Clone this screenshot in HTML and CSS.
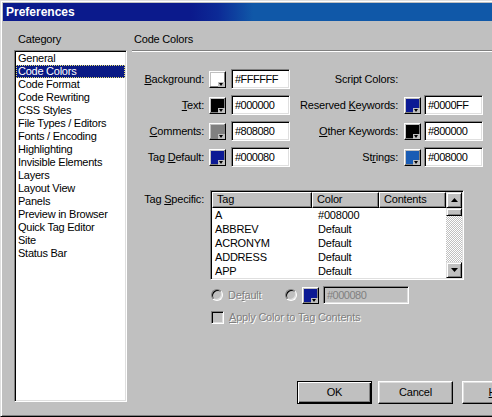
FILE: index.html
```html
<!DOCTYPE html>
<html>
<head>
<meta charset="utf-8">
<title>Preferences</title>
<link rel="stylesheet" href="styles.css">
</head>
<body>
<div class="window">
  <div class="titlebar">Preferences</div>
  <div class="content">
    <div class="cat-col">
      <div class="cat-label">Category</div>
      <ul class="listbox">
        <li>General</li>
        <li class="sel">Code Colors</li>
        <li>Code Format</li>
        <li>Code Rewriting</li>
        <li>CSS Styles</li>
        <li>File Types / Editors</li>
        <li>Fonts / Encoding</li>
        <li>Highlighting</li>
        <li>Invisible Elements</li>
        <li>Layers</li>
        <li>Layout View</li>
        <li>Panels</li>
        <li>Preview in Browser</li>
        <li>Quick Tag Editor</li>
        <li>Site</li>
        <li>Status Bar</li>
      </ul>
    </div>
    <div class="main">
      <div class="section-head">Code Colors</div>
      <div class="rule"></div>
      <div class="color-grid">
        <span class="lbl"><u>B</u>ackground:</span>
        <span class="swatch"><span class="chip c-white"></span><span class="drop"></span></span>
        <span class="field">#FFFFFF</span>
        <span class="lbl lbl2">Script Colors:</span>
        <span></span>
        <span></span>

        <span class="lbl"><u>T</u>ext:</span>
        <span class="swatch"><span class="chip c-black"></span><span class="drop"></span></span>
        <span class="field">#000000</span>
        <span class="lbl lbl2">Reserved <u>K</u>eywords:</span>
        <span class="swatch"><span class="chip c-navy"></span><span class="drop"></span></span>
        <span class="field">#0000FF</span>

        <span class="lbl"><u>C</u>omments:</span>
        <span class="swatch"><span class="chip c-gray"></span><span class="drop"></span></span>
        <span class="field">#808080</span>
        <span class="lbl lbl2"><u>O</u>ther Keywords:</span>
        <span class="swatch"><span class="chip c-black"></span><span class="drop"></span></span>
        <span class="field">#800000</span>

        <span class="lbl">Tag <u>D</u>efault:</span>
        <span class="swatch"><span class="chip c-navy"></span><span class="drop"></span></span>
        <span class="field">#000080</span>
        <span class="lbl lbl2">St<u>r</u>ings:</span>
        <span class="swatch"><span class="chip c-blue"></span><span class="drop"></span></span>
        <span class="field">#008000</span>
      </div>

      <div class="tag-row">
        <div class="lbl tag-lbl">Tag <u>S</u>pecific:</div>
        <div class="listview">
          <div class="lv-main">
            <div class="lv-head">
              <div class="hd col-tag">Tag</div>
              <div class="hd col-color">Color</div>
              <div class="hd col-contents">Contents</div>
            </div>
            <div class="lv-row"><span class="cell col-tag">A</span><span class="cell col-color">#008000</span><span class="cell col-contents"></span></div>
            <div class="lv-row"><span class="cell col-tag">ABBREV</span><span class="cell col-color">Default</span><span class="cell col-contents"></span></div>
            <div class="lv-row"><span class="cell col-tag">ACRONYM</span><span class="cell col-color">Default</span><span class="cell col-contents"></span></div>
            <div class="lv-row"><span class="cell col-tag">ADDRESS</span><span class="cell col-color">Default</span><span class="cell col-contents"></span></div>
            <div class="lv-row"><span class="cell col-tag">APP</span><span class="cell col-color">Default</span><span class="cell col-contents"></span></div>
          </div>
          <div class="vscroll">
            <div class="sb-btn"><svg width="7" height="4" viewBox="0 0 7 4"><path d="M3.5 0 L7 4 L0 4 Z" fill="#000"/></svg></div>
            <div class="sb-thumb"></div>
            <div class="sb-track"></div>
            <div class="sb-btn"><svg width="7" height="4" viewBox="0 0 7 4"><path d="M0 0 L7 0 L3.5 4 Z" fill="#000"/></svg></div>
          </div>
        </div>
      </div>

      <div class="opt-row">
        <span class="radio"></span>
        <span class="dis opt-default">De<u>f</u>ault</span>
        <span class="radio"></span>
        <span class="swatch opt-swatch"><span class="chip c-navy"></span><span class="drop"></span></span>
        <span class="field field-dis">#000080</span>
      </div>
      <div class="chk-row">
        <span class="checkbox"></span>
        <span class="dis"><u>A</u>pply Color to Tag Contents</span>
      </div>

      <div class="buttons">
        <div class="btn btn-default">OK</div>
        <div class="btn btn-cancel">Cancel</div>
        <div class="btn btn-help"><span><u>H</u>elp</span></div>
      </div>
    </div>
  </div>
</div>
</body>
</html>
```
FILE: styles.css
```css
* { box-sizing: border-box; margin: 0; padding: 0; }
html, body {
  width: 492px;
  height: 417px;
  overflow: hidden;
  background: #c0c0c0;
}
body {
  font-family: "Liberation Sans", Arial, sans-serif;
  font-size: 11px;
  line-height: 13px;
  letter-spacing: -0.2px;
  color: #000;
}
u { text-decoration: underline; text-underline-offset: 1px; }

.window {
  width: 600px;
  height: 417px;
  border: 1px solid;
  border-color: #dfdfdf #000 #000 #dfdfdf;
  box-shadow: inset 1px 1px 0 #fff, inset -1px -1px 0 #808080;
  padding: 2px;
  display: flex;
  flex-direction: column;
}
.titlebar {
  height: 18px;
  flex: none;
  background: linear-gradient(to right, #0b1a8c 188px, #0c2a96 215px, #1058a8 250px);
  color: #fff;
  font-weight: bold;
  font-size: 12px;
  letter-spacing: 0;
  padding-left: 3px;
  display: flex;
  align-items: center;
}
.content {
  flex: 1;
  display: flex;
}

/* Category column */
.cat-col {
  width: 124px;
  padding-left: 11px;
  margin-right: 5px;
  flex: none;
}
.cat-label {
  margin-top: 12px;
  height: 13px;
  padding-left: 4px;
  margin-bottom: 4px;
}
.listbox {
  list-style: none;
  width: 113px;
  height: 352px;
  background: #fff;
  border: 1px solid;
  border-color: #808080 #fff #fff #808080;
  box-shadow: inset 1px 1px 0 #000, inset -1px -1px 0 #dfdfdf;
  padding: 1px;
  letter-spacing: -0.25px;
}
.listbox li {
  height: 13px;
  line-height: 13px;
  padding-left: 2px;
  white-space: nowrap;
}
.listbox li.sel {
  background: #0a1a84;
  color: #fff;
  outline: 1px dotted #e6e070;
  outline-offset: -1px;
}

/* Main column */
.main {
  flex: 1;
  display: flex;
  flex-direction: column;
  padding-bottom: 10px;
}
.section-head {
  margin-top: 12px;
  height: 13px;
  padding-left: 2px;
}
.rule {
  margin-top: 4px;
  height: 2px;
  border-top: 1px solid #808080;
  border-bottom: 1px solid #fff;
}

.color-grid {
  margin-top: 17px;
  display: grid;
  grid-template-columns: 77px 22px 59px 114px 20px 59px;
  grid-auto-rows: 20px;
  row-gap: 6px;
  align-items: center;
}
.lbl {
  text-align: right;
  padding-right: 5px;
  white-space: nowrap;
}
.lbl2 { padding-right: 6px; }

.swatch {
  position: relative;
  width: 17px;
  height: 17px;
  background: #c0c0c0;
  border: 1px solid;
  border-color: #fff #000 #000 #fff;
  box-shadow: inset -1px -1px 0 #808080;
  align-self: end;
  margin-bottom: 1px;
}
.chip {
  display: block;
  position: absolute;
  left: 1px;
  top: 1px;
  width: 13px;
  height: 13px;
}
.c-white { background: #fff; }
.c-black { background: #000; }
.c-gray { background: #808080; }
.c-navy { background: #0c1a94; }
.c-blue { background: #1a5cb4; }
.drop {
  position: absolute;
  right: 0;
  bottom: 0;
  width: 7px;
  height: 5px;
  background: #c0c0c0;
}
.drop::after {
  content: "";
  position: absolute;
  left: 1px;
  top: 1px;
  border-left: 2.5px solid transparent;
  border-right: 2.5px solid transparent;
  border-top: 3px solid #000;
}

.field {
  height: 20px;
  background: #fff;
  border: 1px solid;
  border-color: #808080 #fff #fff #808080;
  box-shadow: inset 1px 1px 0 #000, inset -1px -1px 0 #dfdfdf;
  padding-left: 3px;
  display: flex;
  align-items: center;
  letter-spacing: -0.5px;
}

/* Tag specific */
.tag-row {
  margin-top: 23px;
  display: flex;
  align-items: flex-start;
}
.tag-lbl {
  width: 78px;
  padding-top: 3px;
  padding-right: 6px;
}
.listview {
  width: 254px;
  height: 90px;
  background: #fff;
  border: 1px solid;
  border-color: #808080 #fff #fff #808080;
  box-shadow: inset 1px 1px 0 #000, inset -1px -1px 0 #dfdfdf;
  padding: 1px;
  display: flex;
}
.lv-main { width: 234px; }
.lv-head { display: flex; height: 16px; }
.hd {
  height: 16px;
  background: #c0c0c0;
  border: 1px solid;
  border-color: #fff #000 #000 #fff;
  box-shadow: inset -1px -1px 0 #808080;
  padding-left: 4px;
  line-height: 13px;
}
.col-tag { width: 100px; }
.col-color { width: 67px; }
.col-contents { width: 67px; }
.lv-row {
  display: flex;
  height: 14px;
  line-height: 14px;
}
.cell { padding-left: 6px; white-space: nowrap; }
.cell.col-tag { padding-left: 3px; }

.vscroll {
  width: 16px;
  display: flex;
  flex-direction: column;
}
.sb-btn {
  width: 16px;
  height: 16px;
  background: #c0c0c0;
  border: 1px solid;
  border-color: #dfdfdf #000 #000 #dfdfdf;
  box-shadow: inset 1px 1px 0 #fff, inset -1px -1px 0 #808080;
  display: flex;
  align-items: center;
  justify-content: center;
}
.sb-thumb {
  height: 8px;
  background: #c0c0c0;
  border: 1px solid;
  border-color: #dfdfdf #000 #000 #dfdfdf;
  box-shadow: inset 1px 1px 0 #fff, inset -1px -1px 0 #808080;
}
.sb-track {
  flex: 1;
  background-image: repeating-conic-gradient(#c0c0c0 0% 25%, #fff 0% 50%);
  background-size: 2px 2px;
}

/* Options */
.opt-row {
  margin-top: 6px;
  margin-left: 79px;
  height: 18px;
  display: flex;
  align-items: center;
}
.radio {
  width: 12px;
  height: 12px;
  border-radius: 50%;
  border: 1px solid;
  border-color: #808080 #fff #fff #808080;
  box-shadow: inset 1px 1px 0 #000, inset -1px -1px 0 #dfdfdf;
  background: #c0c0c0;
  flex: none;
}
.dis {
  color: #808080;
  text-shadow: 1px 1px 0 #fff;
}
.opt-default {
  margin-left: 5px;
  width: 57px;
}
.opt-swatch {
  margin-left: 5px;
  align-self: center;
  margin-bottom: 0;
}
.field-dis {
  margin-left: 4px;
  width: 86px;
  height: 18px;
  background: #c0c0c0;
  color: #808080;
}
.chk-row {
  margin-top: 7px;
  margin-left: 79px;
  display: flex;
  align-items: center;
}
.checkbox {
  width: 13px;
  height: 13px;
  border: 1px solid;
  border-color: #808080 #fff #fff #808080;
  box-shadow: inset 1px 1px 0 #000, inset -1px -1px 0 #dfdfdf;
  background: #c0c0c0;
  margin-right: 5px;
}

/* Buttons */
.buttons {
  margin-top: auto;
  padding-left: 165px;
  display: flex;
}
.btn {
  width: 75px;
  height: 23px;
  flex: none;
  background: #c0c0c0;
  border: 1px solid;
  border-color: #fff #000 #000 #fff;
  box-shadow: inset -1px -1px 0 #808080, inset 1px 1px 0 #dfdfdf;
  display: flex;
  align-items: center;
  justify-content: center;
  white-space: nowrap;
}
.btn-default {
  border: 1px solid #000;
  box-shadow: inset 1px 1px 0 #fff, inset -1px -1px 0 #000, inset -2px -2px 0 #808080;
}
.btn-cancel { margin-left: 6px; }
.btn-help { margin-left: 9px; }
```
